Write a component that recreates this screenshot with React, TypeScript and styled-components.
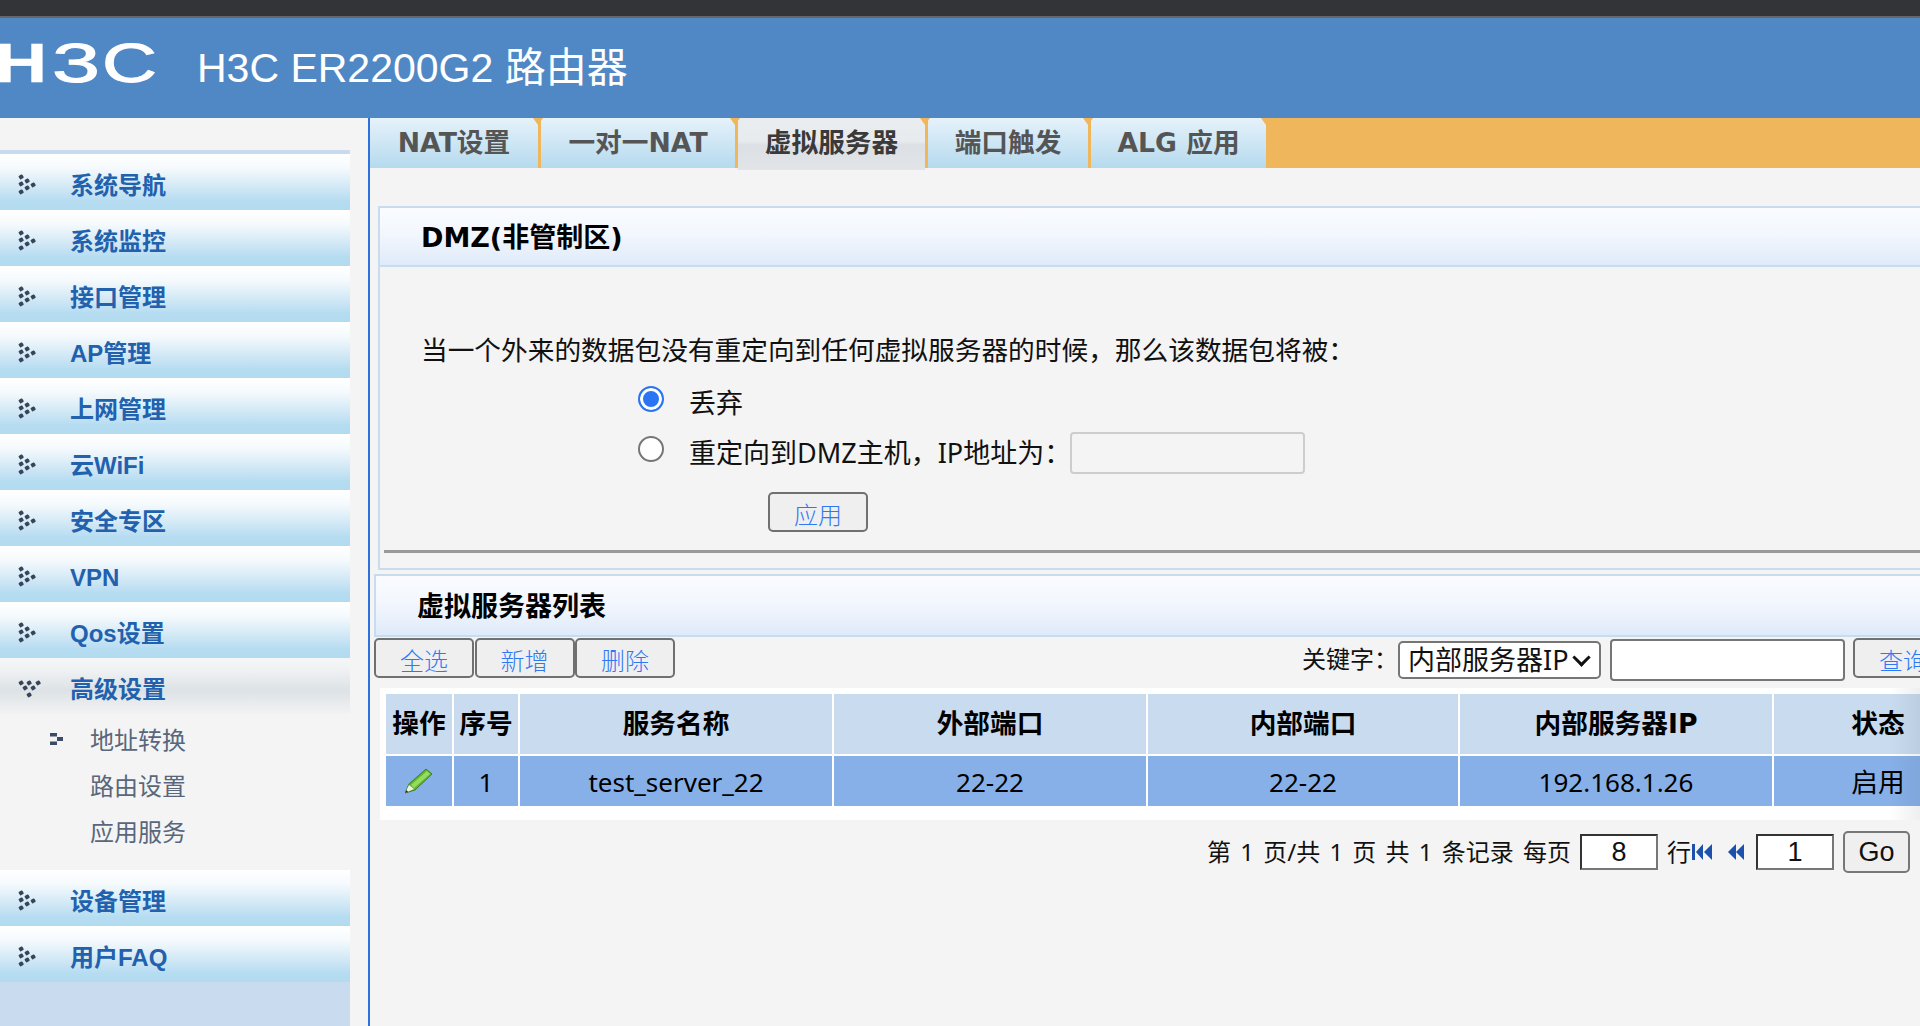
import React from "react";
import styled, { createGlobalStyle } from "styled-components";

const CJK = `"Noto Sans CJK SC", sans-serif`;
const TEXT = `"Noto Sans", ${CJK}`;
const BOLD = `"DejaVu Sans", ${CJK}`;
const ARIAL = `"Liberation Sans", ${CJK}`;

const Global = createGlobalStyle`
  html, body { margin: 0; padding: 0; height: 100%; overflow: hidden; background: #f4f4f4; }
  #root { height: 100%; }
  * { box-sizing: border-box; }
`;

const Page = styled.div`
  display: flex;
  flex-direction: column;
  width: 1920px;
  height: 1026px;
  overflow: hidden;
  background: #f4f4f4;
`;
const TopStrip = styled.div`
  height: 18px;
  flex: none;
  background: #333438;
  border-bottom: 2px solid #66676a;
`;
const Header = styled.header`
  height: 100px;
  flex: none;
  display: flex;
  align-items: center;
  gap: 39px;
  background: #5088c5;
`;
const Logo = styled.svg`
  display: block;
  flex: none;
`;
const Title = styled.h1`
  margin: 0;
  font: 400 41px/1 ${ARIAL};
  color: #fff;
`;
const Body = styled.div`
  flex: 1;
  display: flex;
  min-height: 0;
`;
const SideColumn = styled.aside`
  width: 368px;
  flex: none;
  padding: 32px 18px 0 0;
  display: flex;
`;
const SideNav = styled.nav`
  flex: 1;
  display: flex;
  flex-direction: column;
  border-top: 4px solid #c9dcef;
`;
const NavItem = styled.div<{ $open?: boolean }>`
  height: 56px;
  flex: none;
  display: flex;
  align-items: center;
  gap: 29px;
  padding: 8px 0 0 18px;
  font: 700 24px/1 ${ARIAL};
  color: #2161ad;
  background: ${(p) =>
    p.$open
      ? "linear-gradient(#f6f7f8 0%, #eef0f2 25%, #dde2e6 58%, #e6e9eb 75%, #f1f2f3 100%)"
      : "linear-gradient(#ffffff 0%, #f5fafd 25%, #cfe7f5 62%, #b5dcf1 85%, #b3dbf0 100%)"};
`;
const NavIcon = styled.svg`
  flex: none;
  display: block;
  margin-top: -4px;
`;
const SubList = styled.div`
  height: 156px;
  flex: none;
  padding-top: 2px;
  display: flex;
  flex-direction: column;
`;
const SubItem = styled.div`
  height: 46px;
  display: flex;
  align-items: center;
  padding-left: 50px;
  font: 400 24px/1 ${CJK};
  color: #58677b;
`;
const SubMark = styled.svg`
  width: 13px;
  height: 12px;
  flex: none;
  margin-right: 27px;
`;
const SubGap = styled.span`
  width: 40px;
  flex: none;
`;
const SideFill = styled.div`
  flex: 1;
  background: #c9dcef;
`;
const Main = styled.main`
  flex: 1;
  min-width: 0;
  overflow: hidden;
  border-left: 2px solid #2d70de;
`;
const TabBar = styled.div`
  height: 50px;
  display: flex;
  gap: 3px;
  background: #f0b65c;
`;
const Tab = styled.div<{ $w: number; $active?: boolean }>`
  position: relative;
  width: ${(p) => p.$w}px;
  height: ${(p) => (p.$active ? 52 : 50)}px;
  flex: none;
  display: flex;
  align-items: center;
  justify-content: center;
  padding-bottom: ${(p) => (p.$active ? 2 : 0)}px;
  font: 700 26.7px/1 ${BOLD};
  color: ${(p) => (p.$active ? "#3a3a3a" : "#555")};
  background: ${(p) =>
    p.$active
      ? "linear-gradient(#e9edf0 0%, #e8ebee 45%, #dcdfe3 52%, #e2e5e8 100%)"
      : "linear-gradient(#e6f2fa 0%, #b5daee 100%)"};
  &::after {
    content: "";
    position: absolute;
    top: 0;
    right: -5px;
    border-left: 5px solid transparent;
    border-right: 5px solid transparent;
    border-top: 7px solid #f0b65c;
    z-index: 1;
  }
`;
const Content = styled.div`
  padding-top: 38px;
`;
const DmzPanel = styled.section`
  width: 1610px;
  margin-left: 8px;
  border: 2px solid #c9dcef;
  border-right: 0;
`;
const ListPanel = styled.section`
  width: 1610px;
  margin: 4px 0 0 4px;
`;
const PanelHead = styled.h2<{ $h: number; $pad: number; $frame?: boolean }>`
  margin: 0;
  height: ${(p) => p.$h}px;
  display: flex;
  align-items: center;
  padding: 2px 0 0 ${(p) => p.$pad}px;
  font: 700 27px/1 ${BOLD};
  color: #000;
  background: linear-gradient(#f9fbff 0%, #f3f7fd 45%, #dfeaf9 100%);
  border-bottom: 2px solid #c9dcef;
  ${(p) => (p.$frame ? "border-top: 2px solid #c9dcef; border-left: 2px solid #c9dcef;" : "")}
`;
const DmzBody = styled.div`
  padding-top: 63px;
  font: 400 26.7px/40px ${TEXT};
  color: #111;
`;
const Lead = styled.p`
  margin: 0 0 4px 41px;
  height: 40px;
  line-height: 40px;
`;
const RadioRow = styled.label`
  height: 50px;
  display: flex;
  align-items: center;
  padding: 8px 0 0 258px;
  font-size: 27px;
`;
const Radio = styled.input`
  appearance: none;
  width: 26px;
  height: 26px;
  flex: none;
  margin: 0 25px 8px 0;
  border-radius: 50%;
  border: 2px solid #767676;
  background: #fff;
  &:checked {
    border-color: #2a75f3;
    box-shadow: inset 0 0 0 3px #fff;
    background: #2a75f3;
  }
`;
const PlainInput = styled.input`
  width: 235px;
  height: 42px;
  margin-left: -1px;
  border: 2px solid #cdcdcd;
  border-radius: 4px;
  background: #f4f4f4;
`;
const Btn = styled.button<{ $ml?: number }>`
  width: 100px;
  height: 40px;
  flex: none;
  margin-left: ${(p) => p.$ml ?? 0}px;
  padding: 4px 0 0;
  border: 2px solid #707070;
  border-radius: 5px;
  background: #efefef;
  font: 300 24px/1 ${CJK};
  color: #2f78f5;
`;
const ApplyRow = styled.div`
  display: flex;
  padding-top: 18px;
`;
const Rule = styled.hr`
  margin: 18px 0 15px 4px;
  height: 3px;
  border: 0;
  background: #999;
`;
const Toolbar = styled.div`
  height: 45px;
  display: flex;
  align-items: flex-start;
  gap: 0.5px;
  padding-top: 1px;
  padding-right: 31px;
`;
const SearchGroup = styled.div`
  margin-left: auto;
  display: flex;
  align-items: center;
  height: 39px;
  font: 400 24px/1 ${CJK};
  color: #111;
`;
const SelectBox = styled.div`
  position: relative;
  width: 203px;
  height: 38px;
  margin-top: 4px;
  flex: none;
  &::after {
    content: "";
    position: absolute;
    top: 10px;
    right: 13px;
    width: 10px;
    height: 10px;
    border-right: 3px solid #111;
    border-bottom: 3px solid #111;
    transform: rotate(45deg);
    pointer-events: none;
  }
`;
const KeySelect = styled.select`
  appearance: none;
  display: block;
  width: 100%;
  height: 100%;
  padding: 0 0 0 8px;
  border: 2px solid #767676;
  border-radius: 5px;
  background: #fff;
  font: 400 27px/1 ${TEXT};
  color: #111;
`;
const SearchInput = styled.input`
  width: 235px;
  height: 42px;
  margin: 5px 8px 0 9px;
  border: 2px solid #767676;
  border-radius: 4px;
  background: #fff;
`;
const TableWrap = styled.div`
  position: relative;
  margin: 6px 0 0 6px;
  padding: 4px 0 12px 4px;
  background: #fff;
`;
const Table = styled.table`
  width: 1600px;
  table-layout: fixed;
  border-collapse: separate;
  border-spacing: 2px;
`;
const Th = styled.th<{ $w: number }>`
  width: ${(p) => p.$w}px;
  height: 60px;
  padding: 0;
  background: #c9dbee;
  font: 700 26.7px/1 ${BOLD};
  color: #000;
  text-align: center;
`;
const Td = styled.td<{ $wide?: boolean }>`
  height: 50px;
  padding: 2px 0 0;
  background: #87b0e8;
  font: 400 ${(p) => (p.$wide ? 26.7 : 26)}px/1 ${TEXT};
  color: #000;
  text-align: center;
`;
const Pencil = styled.svg`
  display: block;
  margin: -2px auto 0;
`;
const EdgeShade = styled.div`
  position: absolute;
  top: 0;
  bottom: 0;
  left: 1510px;
  width: 30px;
  background: linear-gradient(90deg, rgba(60, 70, 90, 0), rgba(60, 70, 90, 0.09));
  pointer-events: none;
`;
const Pager = styled.div`
  height: 64px;
  display: flex;
  align-items: center;
  padding-left: 833px;
  font: 400 24px/1 ${TEXT};
  color: #111;
  word-spacing: 3px;
  white-space: nowrap;
`;
const PagerText = styled.span`
  width: 373px;
  flex: none;
`;
const PageInput = styled.input<{ $ml?: number }>`
  width: 78px;
  height: 36px;
  flex: none;
  margin-left: ${(p) => p.$ml ?? 0}px;
  border: 2px solid;
  border-color: #333 #777 #777 #333;
  background: #fff;
  text-align: center;
  font: 400 27px/1 ${ARIAL};
  color: #111;
`;
const RowWord = styled.span`
  margin: 0 1px 0 9px;
  flex: none;
`;
const RewindIcon = styled.svg<{ $ml?: number }>`
  flex: none;
  display: block;
  margin-left: ${(p) => p.$ml ?? 0}px;
`;
const GoButton = styled.button`
  width: 67px;
  height: 42px;
  flex: none;
  margin: 0 9px 0 9px;
  padding: 0;
  border: 2px solid #777;
  border-radius: 5px;
  background: #efefef;
  font: 400 27px/1 ${ARIAL};
  color: #111;
`;

const collapsedDots: [number, number][] = [
  [1, 1], [1, 8], [1, 16], [7, 5], [7, 12], [13, 9],
];
const openDots: [number, number][] = [
  [1, 3], [9, 3], [18, 3], [5, 8], [13, 8], [9, 15],
];

function DotIcon({ open }: { open?: boolean }) {
  const dots = open ? openDots : collapsedDots;
  return (
    <NavIcon width="23" height="21" viewBox="0 0 23 21">
      {dots.map(([x, y]) => (
        <rect key={`${x}-${y}`} x={x} y={y} width="4.4" height="4" rx="1" fill="#36455a" transform={`rotate(-30 ${x + 2} ${y + 2})`} />
      ))}
    </NavIcon>
  );
}

function Rewind({ bar, ml }: { bar?: boolean; ml?: number }) {
  return (
    <RewindIcon $ml={ml} width={bar ? 21 : 17} height="18" viewBox={bar ? "0 0 21 18" : "0 0 17 18"}>
      <g fill="#1c50ac">
        {bar && <rect x="0" y="1" width="3" height="16" />}
        <polygon points={bar ? "11,1 4,9 11,17" : "9,1 1,9 9,17"} />
        <polygon points={bar ? "20,1 12,9 20,17" : "17,1 9,9 17,17"} />
      </g>
    </RewindIcon>
  );
}

const navTop = ["系统导航", "系统监控", "接口管理", "AP管理", "上网管理", "云WiFi", "安全专区", "VPN", "Qos设置"];
const columns: [string, number][] = [
  ["操作", 66], ["序号", 64], ["服务名称", 312], ["外部端口", 312],
  ["内部端口", 310], ["内部服务器IP", 312], ["状态", 208],
];

export default function App() {
  return (
    <Page>
      <Global />
      <TopStrip />
      <Header>
        <Logo width="158" height="60" viewBox="0 0 158 60">
          <g fill="#fff" stroke="#fff" fontFamily="'Liberation Sans', sans-serif" fontSize="56">
            <text x="-5" y="44" fontWeight="700" strokeWidth="0.5" textLength="52" lengthAdjust="spacingAndGlyphs">H</text>
            <text x="52" y="44" strokeWidth="1" textLength="48" lengthAdjust="spacingAndGlyphs">3</text>
            <text x="102" y="44" strokeWidth="1" textLength="55" lengthAdjust="spacingAndGlyphs">C</text>
          </g>
        </Logo>
        <Title>H3C ER2200G2 路由器</Title>
      </Header>
      <Body>
        <SideColumn>
          <SideNav>
            {navTop.map((n) => (
              <NavItem key={n}><DotIcon />{n}</NavItem>
            ))}
            <NavItem $open><DotIcon open />高级设置</NavItem>
            <SubList>
              <SubItem>
                <SubMark viewBox="0 0 13 12">
                  <g fill="#3b4d66">
                    <rect x="0" y="0" width="7" height="3.5" />
                    <rect x="0" y="8.5" width="7" height="3.5" />
                    <rect x="7" y="4" width="6" height="4" />
                  </g>
                </SubMark>
                地址转换
              </SubItem>
              <SubItem><SubGap />路由设置</SubItem>
              <SubItem><SubGap />应用服务</SubItem>
            </SubList>
            <NavItem><DotIcon />设备管理</NavItem>
            <NavItem><DotIcon />用户FAQ</NavItem>
            <SideFill />
          </SideNav>
        </SideColumn>
        <Main>
          <TabBar>
            <Tab $w={168}>NAT设置</Tab>
            <Tab $w={194}>一对一NAT</Tab>
            <Tab $w={187} $active>虚拟服务器</Tab>
            <Tab $w={160}>端口触发</Tab>
            <Tab $w={175}>ALG 应用</Tab>
          </TabBar>
          <Content>
            <DmzPanel>
              <PanelHead $h={59} $pad={41}>DMZ(非管制区)</PanelHead>
              <DmzBody>
                <Lead>当一个外来的数据包没有重定向到任何虚拟服务器的时候，那么该数据包将被：</Lead>
                <RadioRow><Radio type="radio" name="dmz" defaultChecked />丢弃</RadioRow>
                <RadioRow>
                  <Radio type="radio" name="dmz" />
                  重定向到DMZ主机，IP地址为：
                  <PlainInput />
                </RadioRow>
                <ApplyRow><Btn $ml={388}>应用</Btn></ApplyRow>
                <Rule />
              </DmzBody>
            </DmzPanel>
            <ListPanel>
              <PanelHead $h={63} $pad={41} $frame>虚拟服务器列表</PanelHead>
              <Toolbar>
                <Btn>全选</Btn>
                <Btn>新增</Btn>
                <Btn>删除</Btn>
                <SearchGroup>
                  关键字：
                  <SelectBox>
                    <KeySelect defaultValue="ip">
                      <option value="ip">内部服务器IP</option>
                    </KeySelect>
                  </SelectBox>
                  <SearchInput />
                  <Btn>查询</Btn>
                </SearchGroup>
              </Toolbar>
              <TableWrap>
                <Table>
                  <thead>
                    <tr>
                      {columns.map(([t, w]) => (
                        <Th key={t} $w={w}>{t}</Th>
                      ))}
                    </tr>
                  </thead>
                  <tbody>
                    <tr>
                      <Td>
                        <Pencil width="28" height="26" viewBox="0 0 28 26">
                          <polygon points="0,25 4,16 21,1 27,6 10,22" fill="#62b533" stroke="#3c7d22" strokeWidth="1" />
                          <polygon points="6,17 22,3 25,6 9,20" fill="#93dc5c" />
                          <polygon points="0,25 4,17 9,21" fill="#eef2e2" />
                          <polygon points="0,25 1.6,22 3,24" fill="#222" />
                        </Pencil>
                      </Td>
                      <Td>1</Td>
                      <Td>test_server_22</Td>
                      <Td>22-22</Td>
                      <Td>22-22</Td>
                      <Td>192.168.1.26</Td>
                      <Td $wide>启用</Td>
                    </tr>
                  </tbody>
                </Table>
                <EdgeShade />
              </TableWrap>
              <Pager>
                <PagerText>第 1 页/共 1 页 共 1 条记录 每页</PagerText>
                <PageInput defaultValue="8" />
                <RowWord>行</RowWord>
                <Rewind bar />
                <Rewind ml={14} />
                <PageInput defaultValue="1" $ml={12} />
                <GoButton>Go</GoButton>
                <Rewind />
              </Pager>
            </ListPanel>
          </Content>
        </Main>
      </Body>
    </Page>
  );
}
